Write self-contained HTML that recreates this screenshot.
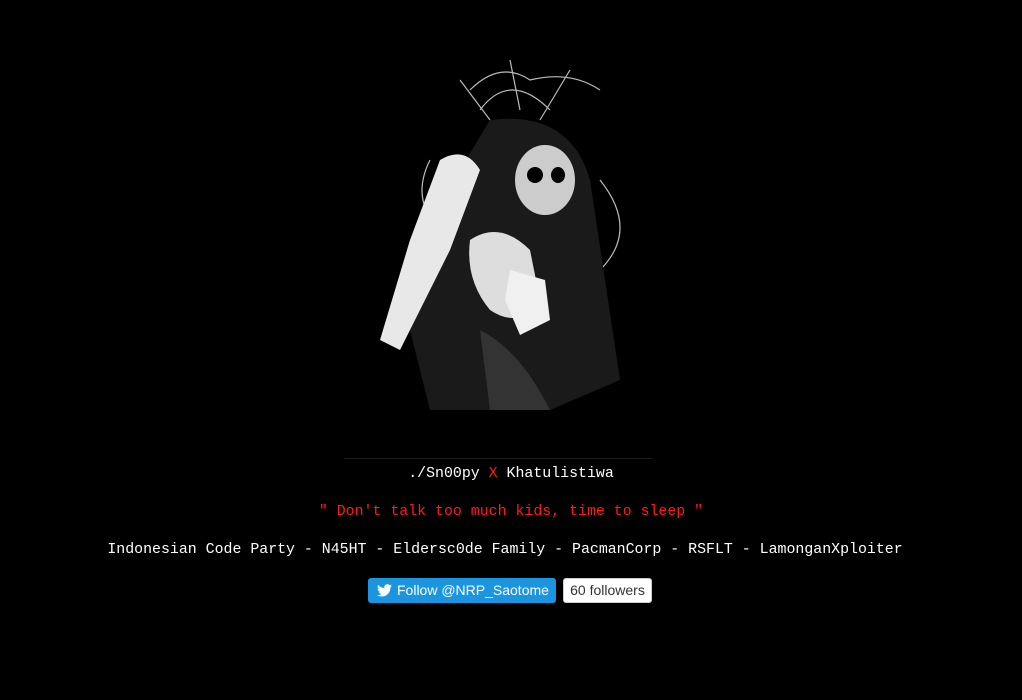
<!DOCTYPE html>
<html><head><style>
body{margin:0;background:#000;width:1022px;height:700px;overflow:hidden;font-family:"Liberation Mono",monospace;color:#fff}
.t{position:absolute;left:0;width:1022px;text-align:center;font-size:14.9px;white-space:nowrap}
hr{position:absolute;left:344px;width:308px;top:458px;margin:0;border:0;border-top:1px solid #1a1a1a}
.btn{position:absolute;left:368px;top:578px;width:188px;height:25px;background:#1b95e0;border-radius:3px;color:#fff;font:14px "Liberation Sans",sans-serif;line-height:25px}
.cnt{position:absolute;left:563px;top:578px;width:87px;height:23px;border:1px solid #ccc;background:#fff;border-radius:3px;color:#333;font:14px "Liberation Sans",sans-serif;line-height:23px;text-align:center}
</style></head><body>
<svg style="position:absolute;left:370px;top:50px" width="270" height="380" viewBox="0 0 270 380">
<g fill="none" stroke="#bbb" stroke-width="1.2">
<path d="M100 40 Q130 10 160 30 Q200 20 230 40 M110 60 Q140 20 180 60 M90 30 L120 70 M200 20 L170 70 M140 10 L150 60"/>
<path d="M60 110 Q40 150 70 180 Q100 220 60 260 M230 130 Q270 180 230 220 Q200 260 150 250 Q90 250 50 290"/>
</g>
<path d="M120 70 Q200 60 220 130 L250 330 L180 360 L60 360 L40 280 Q80 200 90 120 Z" fill="#1a1a1a"/>
<ellipse cx="175" cy="130" rx="30" ry="35" fill="#ccc"/>
<ellipse cx="165" cy="125" rx="8" ry="8" fill="#000"/><ellipse cx="188" cy="125" rx="7" ry="8" fill="#000"/>
<path d="M100 190 Q130 170 160 200 L170 250 Q150 280 120 260 Q95 230 100 190 Z" fill="#ddd"/>
<path d="M70 110 Q95 95 110 120 L80 200 L30 300 L10 290 L40 190 Z" fill="#e8e8e8"/>
<path d="M140 220 L175 230 L180 270 L150 285 L135 250 Z" fill="#f0f0f0"/>
<path d="M110 280 Q150 300 180 360 L120 360 Z" fill="#333"/>
</svg>
<hr>
<div class="t" style="top:466px">./Sn00py <span style="color:#ff1a1a">X</span> Khatulistiwa</div>
<div class="t" style="top:504px;color:#ff1a1a">" Don't talk too much kids, time to sleep "</div>
<div class="t" style="top:542px;left:-6px">Indonesian Code Party - N45HT - Eldersc0de Family - PacmanCorp - RSFLT - LamonganXploiter</div>
<div class="btn"><svg style="position:absolute;left:9px;top:6px" width="15" height="13" viewBox="0 0 24 20"><path fill="#fff" d="M24 2.4a10 10 0 0 1-2.8.8A5 5 0 0 0 23.3.4a10 10 0 0 1-3.1 1.2A4.9 4.9 0 0 0 11.8 6 14 14 0 0 1 1.7.9a4.9 4.9 0 0 0 1.5 6.6 4.9 4.9 0 0 1-2.2-.6 4.9 4.9 0 0 0 3.9 4.9 4.9 4.9 0 0 1-2.2.1 4.9 4.9 0 0 0 4.6 3.4A9.9 9.9 0 0 1 0 17.3 14 14 0 0 0 7.5 19.5c9.1 0 14-7.5 14-14v-.6A10 10 0 0 0 24 2.4z"/></svg><span style="position:absolute;left:29px">Follow @NRP_Saotome</span></div>
<div class="cnt">60 followers</div>
</body></html>
